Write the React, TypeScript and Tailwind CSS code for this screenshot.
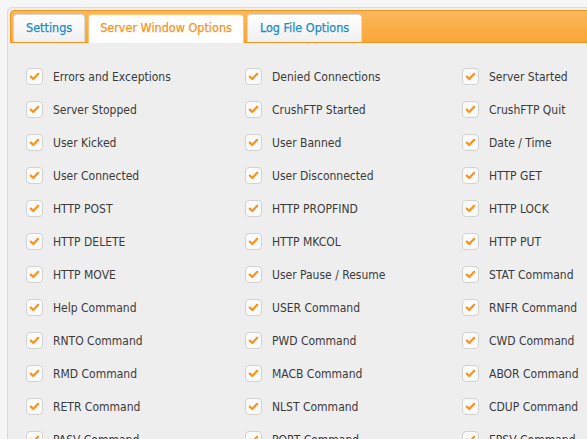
import React from 'react';

const rows: string[][] = [
  ['Errors and Exceptions', 'Denied Connections', 'Server Started'],
  ['Server Stopped', 'CrushFTP Started', 'CrushFTP Quit'],
  ['User Kicked', 'User Banned', 'Date / Time'],
  ['User Connected', 'User Disconnected', 'HTTP GET'],
  ['HTTP POST', 'HTTP PROPFIND', 'HTTP LOCK'],
  ['HTTP DELETE', 'HTTP MKCOL', 'HTTP PUT'],
  ['HTTP MOVE', 'User Pause / Resume', 'STAT Command'],
  ['Help Command', 'USER Command', 'RNFR Command'],
  ['RNTO Command', 'PWD Command', 'CWD Command'],
  ['RMD Command', 'MACB Command', 'ABOR Command'],
  ['RETR Command', 'NLST Command', 'CDUP Command'],
  ['PASV Command', 'PORT Command', 'EPSV Command'],
];

const tabs = [
  { label: 'Settings', active: false },
  { label: 'Server Window Options', active: true },
  { label: 'Log File Options', active: false },
];

const CheckBox = () => (
  <span className="w-[17px] h-[17px] shrink-0 rounded-[4px] border border-[#d2d2d2] bg-[#fafafa] flex items-center justify-center">
    <svg width="11" height="11" viewBox="0 0 11 11" fill="none">
      <path d="M1.8 5.6 L4.3 8 L9.2 2.8" stroke="#f7931e" strokeWidth="2.2" strokeLinecap="round" strokeLinejoin="round" />
    </svg>
  </span>
);

export default function App() {
  return (
    <div
      className="w-[587px] h-[439px] overflow-hidden bg-[#f6f6f6] pt-[7px] pl-[7px] text-[12px] font-stretch-condensed"
      style={{ fontFamily: '"DejaVu Sans Condensed", "DejaVu Sans", Verdana, sans-serif' }}
    >
      <div className="w-[720px] min-h-[500px] border border-[#dadada] rounded-tl-[5px] bg-[#eeeeee] p-[2px]">
        {/* Tab strip */}
        <div className="h-[33px] border border-[#f0951e] rounded-tl-[4px] bg-gradient-to-b from-[#fbb85a] to-[#f9a636] flex items-end pl-[2px] gap-[3px]">
          {tabs.map((t) => (
            <div
              key={t.label}
              className={
                t.active
                  ? 'h-[29px] -mb-px pb-[1px] px-[11px] flex items-center rounded-t-[4px] border border-b-0 border-[#fcc878] bg-white text-[#f7931e] text-[12.5px] [-webkit-text-stroke:0.25px]'
                  : 'h-[28px] px-3 flex items-center rounded-t-[4px] border border-b-0 border-[#d9d9d9] bg-gradient-to-b from-white to-[#efefef] text-[#1b8cc4] text-[12.5px] [-webkit-text-stroke:0.25px]'
              }
            >
              {t.label}
            </div>
          ))}
        </div>

        {/* Options */}
        <div className="pt-[17px] pl-[16px] grid grid-cols-[219px_217px_217px]">
          {rows.flat().map((label) => (
            <div key={label} className="h-[33px] flex items-center gap-[10px] text-[#3a3a3a] whitespace-nowrap">
              <CheckBox />
              <span>{label}</span>
            </div>
          ))}
        </div>
      </div>
    </div>
  );
}
